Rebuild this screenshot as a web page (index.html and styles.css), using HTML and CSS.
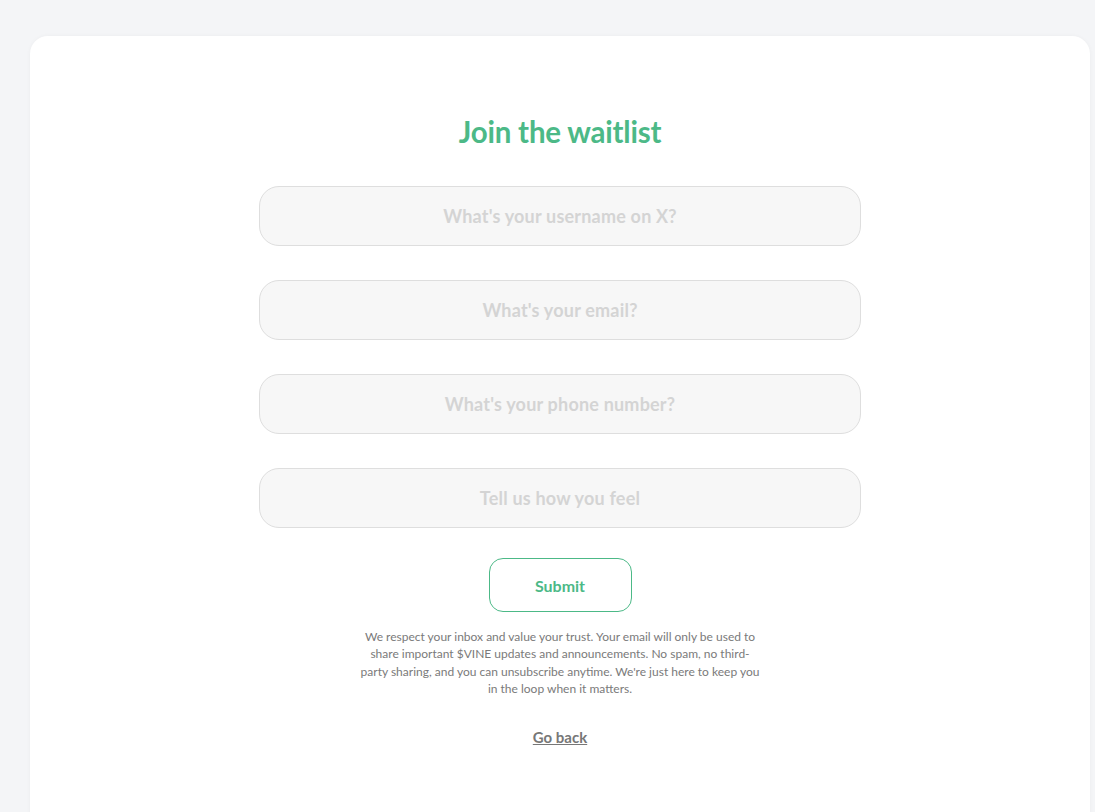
FILE: index.html
```html
<!DOCTYPE html>
<html lang="en">
<head>
  <meta charset="UTF-8">
  <title>Join the waitlist</title>
  <link rel="stylesheet" href="styles.css">
</head>
<body>
  <div class="page">
    <div class="card">
      <h1 class="title">Join the waitlist</h1>
      <form class="waitlist-form">
        <input class="field" type="text" placeholder="What's your username on X?">
        <input class="field" type="email" placeholder="What's your email?">
        <input class="field" type="tel" placeholder="What's your phone number?">
        <input class="field" type="text" placeholder="Tell us how you feel">
        <button class="submit-btn" type="button">Submit</button>
      </form>
      <p class="disclaimer">We respect your inbox and value your trust. Your email will only be used to share important $VINE updates and announcements. No spam, no third-party sharing, and you can unsubscribe anytime. We're just here to keep you in the loop when it matters.</p>
      <a class="back-link" href="#">Go back</a>
    </div>
  </div>
</body>
</html>
```

FILE: styles.css
```css
body {
  margin: 0;
  background: #f4f5f7;
  font-family: Lato, 'Noto Sans', sans-serif;
}
.page {
  padding: 36px 5px 0 30px;
  height: 812px;
  box-sizing: border-box;
  overflow: hidden;
}
.card {
  background: #fff;
  border-radius: 18px;
  box-shadow: 0 0 4px rgba(0,0,0,0.04);
  min-height: 900px;
  padding-top: 78px;
  display: flex;
  flex-direction: column;
  align-items: center;
}
.title {
  margin: 0 0 36px;
  font-size: 29.5px;
  font-weight: 700;
  color: #4cb987;
  line-height: 36px;
  letter-spacing: -0.2px;
}
.waitlist-form {
  display: flex;
  flex-direction: column;
  align-items: center;
  gap: 34px;
  width: 602px;
}
.field {
  width: 100%;
  height: 60px;
  box-sizing: border-box;
  background: #f7f7f7;
  border: 1px solid #dedede;
  border-radius: 20px;
  text-align: center;
  font-family: inherit;
  font-size: 18px;
  font-weight: 700;
  letter-spacing: 0.2px;
  outline: none;
}
.field::placeholder {
  color: #d4d4d4;
}
.submit-btn {
  margin-top: -4px;
  width: 143px;
  height: 54px;
  background: #fff;
  border: 1px solid #4cb987;
  border-radius: 14px;
  color: #4cb987;
  font-family: inherit;
  font-size: 16px;
  font-weight: 700;
  cursor: pointer;
}
.disclaimer {
  margin: 16px 0 0;
  width: 402px;
  text-align: center;
  font-size: 12px;
  line-height: 17.3px;
  color: #7a7a7a;
}
.back-link {
  margin-top: 31px;
  font-size: 15px;
  font-weight: 700;
  color: #777;
  text-decoration: underline;
}
```
